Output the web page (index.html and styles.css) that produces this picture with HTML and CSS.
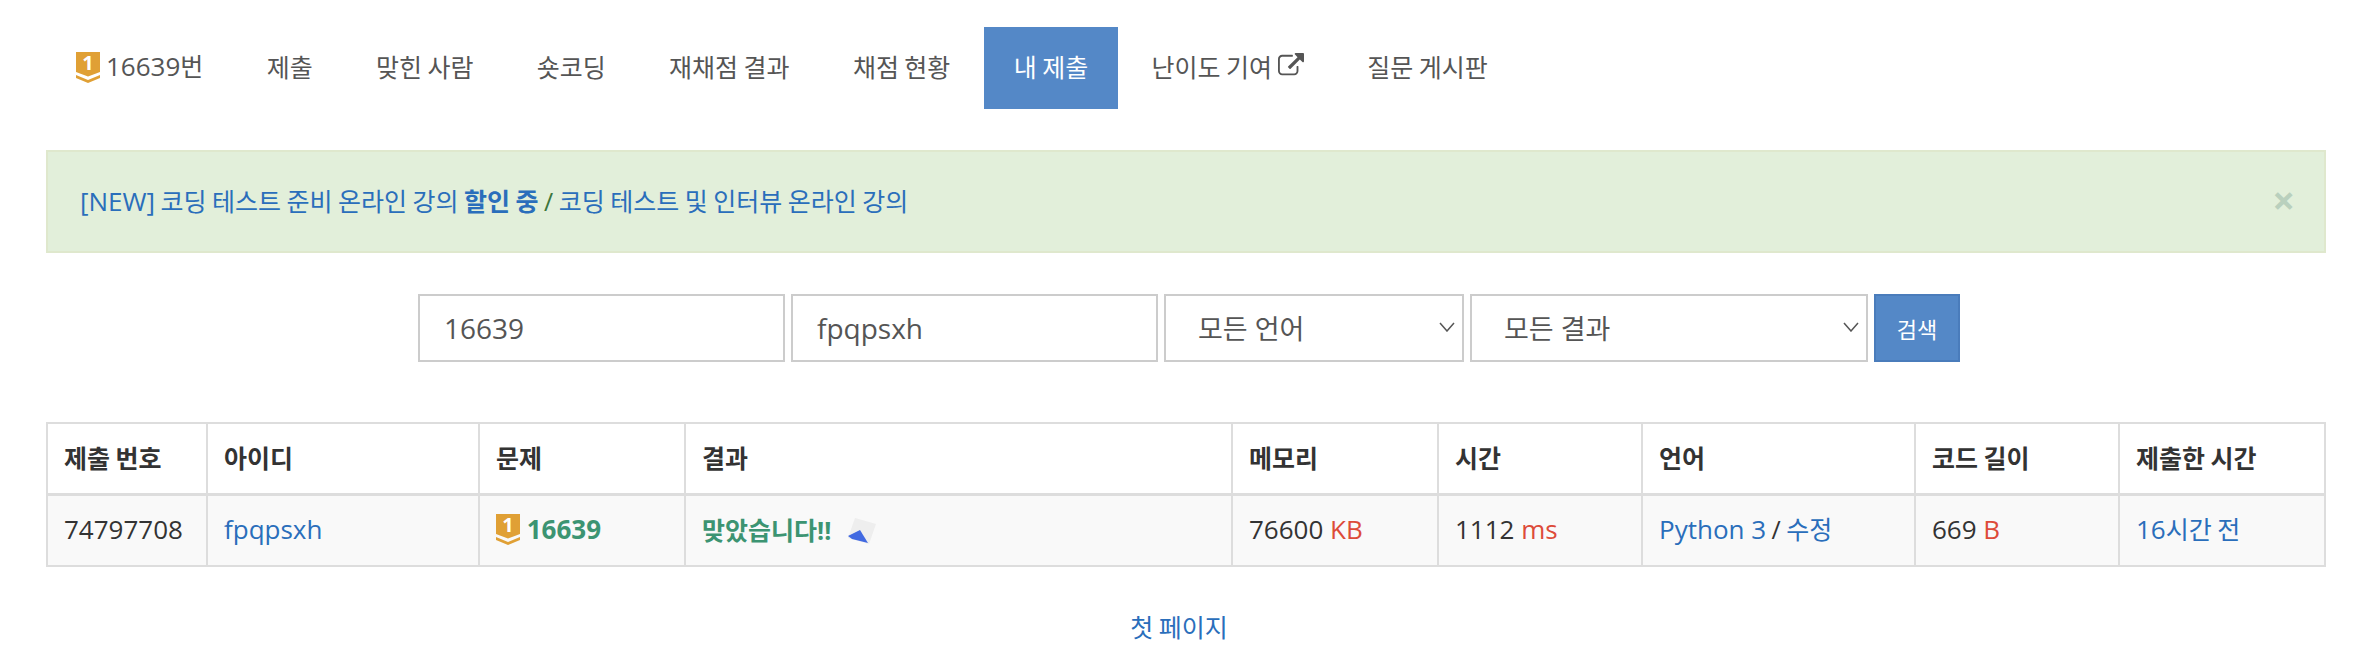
FILE: index.html
```html
<!DOCTYPE html>
<html lang="ko">
<head>
<meta charset="utf-8">
<title>내 제출</title>
<link rel="stylesheet" href="styles.css">
</head>
<body>
<div class="page">
  <ul class="nav">
    <li><a href="#"><svg class="tier" viewBox="0 0 24 31"><path fill="#e0a035" d="M0 0h24v20l-12 4.500-12-4.500z"/><path fill="#e0a035" d="M0 23l12 5 12-5v3l-12 5-12-5z"/><text x="12" y="18" text-anchor="middle" class="tier-num">1</text></svg><span><span class="en">16639</span>번</span></a></li>
    <li><a href="#">제출</a></li>
    <li><a href="#">맞힌 사람</a></li>
    <li><a href="#">숏코딩</a></li>
    <li><a href="#">재채점 결과</a></li>
    <li><a href="#">채점 현황</a></li>
    <li class="active"><a href="#">내 제출</a></li>
    <li><a href="#"><span>난이도 기여</span><svg class="ext" viewBox="0 0 1792 1792"><path fill="currentColor" d="M1408 928v320q0 119-84.5 203.5t-203.5 84.5h-832q-119 0-203.5-84.5t-84.5-203.5v-832q0-119 84.5-203.5t203.5-84.5h704q14 0 23 9t9 23v64q0 14-9 23t-23 9h-704q-66 0-113 47t-47 113v832q0 66 47 113t113 47h832q66 0 113-47t47-113v-320q0-14 9-23t23-9h64q14 0 23 9t9 23zm384-864v512q0 26-19 45t-45 19-45-19l-176-176-652 652q-10 10-23 10t-23-10l-114-114q-10-10-10-23t10-23l652-652-176-176q-19-19-19-45t19-45 45-19h512q26 0 45 19t19 45z"/></svg></a></li>
    <li><a href="#">질문 게시판</a></li>
  </ul>

  <div class="alert">
    <p><a href="#"><span class="en">[NEW]</span> 코딩 테스트 준비 온라인 강의 <b>할인 중</b></a> / <a href="#">코딩 테스트 및 인터뷰 온라인 강의</a></p>
    <span class="close">×</span>
  </div>

  <form class="search">
    <input class="field field-id" value="16639">
    <input class="field field-id" value="fpqpsxh">
    <span class="select-wrap sel-lang">
      <select class="field"><option>모든 언어</option></select>
      <svg class="chev" viewBox="0 0 16 10"><path d="M1 1l7 8 7-8" fill="none" stroke="#555" stroke-width="1.5"/></svg>
    </span>
    <span class="select-wrap sel-result">
      <select class="field"><option>모든 결과</option></select>
      <svg class="chev" viewBox="0 0 16 10"><path d="M1 1l7 8 7-8" fill="none" stroke="#555" stroke-width="1.5"/></svg>
    </span>
    <button type="button" class="btn">검색</button>
  </form>

  <table class="status">
    <thead>
      <tr><th>제출 번호</th><th>아이디</th><th>문제</th><th>결과</th><th>메모리</th><th>시간</th><th>언어</th><th>코드 길이</th><th>제출한 시간</th></tr>
    </thead>
    <tbody>
      <tr>
        <td class="en">74797708</td>
        <td class="en"><a href="#">fpqpsxh</a></td>
        <td class="en"><a href="#" class="solved"><svg class="tier" viewBox="0 0 24 31"><path fill="#e0a035" d="M0 0h24v20l-12 4.500-12-4.500z"/><path fill="#e0a035" d="M0 23l12 5 12-5v3l-12 5-12-5z"/><text x="12" y="18" text-anchor="middle" class="tier-num">1</text></svg> 16639</a></td>
        <td><span class="solved">맞았습니다!!</span><svg class="lang-mark" viewBox="0 0 28 26"><path fill="#eeeeee" d="M7 0l21 6-7 20-21-6z"/><path fill="#4169e1" d="M0 18l12-6 8 13-16-4z"/></svg></td>
        <td class="en">76600 <span class="unit">KB</span></td>
        <td class="en">1112 <span class="unit">ms</span></td>
        <td><a href="#" class="en">Python 3</a> / <a href="#">수정</a></td>
        <td class="en">669 <span class="unit">B</span></td>
        <td><a href="#"><span class="en">16</span>시간 전</a></td>
      </tr>
    </tbody>
  </table>

  <div class="pager"><a href="#">첫 페이지</a></div>
</div>
</body>
</html>
```
FILE: styles.css
```css
* { box-sizing: border-box; }
html, body { margin: 0; padding: 0; background: #fff; }
body {
  font-family: "Open Sans", "Noto Sans CJK KR", sans-serif;
  font-size: 25px;
  word-spacing: -1px;
  color: #333;
  overflow: hidden;
}
a { color: #2a6ebb; text-decoration: none; }
.en { font-size: 26px; word-spacing: 0; }
.page { width: 2358px; padding: 27px 32px 0 46px; }

.nav { display: flex; gap: 3.3px; list-style: none; margin: 0 0 41px; padding: 0; height: 82px; }
.nav a { display: flex; align-items: center; gap: 6px; height: 82px; padding: 0 30px 5px; color: #555; white-space: pre; }
.nav .active a { background: #5488c7; color: #fff; }
.ext { width: 26px; height: 26px; }
.tier { width: 24px; height: 31px; flex: none; vertical-align: -6px; overflow: visible; }
.nav .tier { margin-top: 3px; }
.tier-num { font-family: "Open Sans", sans-serif; font-size: 20px; font-weight: 700; fill: #fff; }

.alert {
  display: flex; justify-content: space-between; align-items: center;
  height: 103px; padding: 0 32px 3px;
  background: #e2efda; border: 2px solid #dfe8cd; color: #3c763d;
}
.alert p { margin: 0; }
.close { font-size: 40px; font-weight: 700; color: #b9d0bd; line-height: 1; margin-right: -3px; }

.search { display: flex; justify-content: center; gap: 6px; margin: 41px 0 60px; height: 68px; padding-left: 6px; }
.field {
  height: 68px; padding: 0 24px; border: 2px solid #ccc; background: #fff;
  font: inherit; font-size: 28px; color: #555; border-radius: 0; outline: 0;
  appearance: none; -webkit-appearance: none;
}
.field-id { width: 367px; }
.select-wrap { position: relative; display: block; }
.select-wrap select { width: 100%; padding-left: 32px; font-size: 27px; }
.sel-lang { width: 300px; }
.sel-result { width: 398px; }
.chev { position: absolute; right: 8px; top: 28px; width: 18px; height: 10px; }
.btn {
  width: 86px; height: 68px; padding: 0; background: #5488c7; border: 2px solid #4a7cbb;
  color: #fff; font: inherit; font-size: 22px;
}

.status { width: 2278px; table-layout: fixed; border-collapse: collapse; }
.status th, .status td { border: 2px solid #ddd; padding: 0 16px 3px; text-align: left; white-space: nowrap; height: 72px; }
.status th { height: 71px; font-weight: 700; border-bottom-width: 3px; }
.status tbody tr { background: #f9f9f9; }
.status th:nth-child(1) { width: 160px; }
.status th:nth-child(2) { width: 272px; }
.status th:nth-child(3) { width: 206px; }
.status th:nth-child(4) { width: 547px; }
.status th:nth-child(5) { width: 206px; }
.status th:nth-child(6) { width: 204px; }
.status th:nth-child(7) { width: 273px; }
.status th:nth-child(8) { width: 204px; }
.status th:nth-child(9) { width: 206px; }
.solved { color: #3c9472; font-weight: 700; }
.unit { color: #dd4b39; }
.lang-mark { width: 28px; height: 26px; margin-left: 17px; vertical-align: -4px; }

.pager { margin: 41px 14px 0 0; text-align: center; }
```
